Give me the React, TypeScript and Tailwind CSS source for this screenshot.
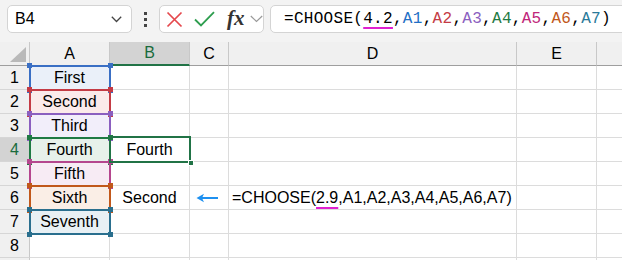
import React from "react";

const cols = ["A", "B", "C", "D", "E", ""];

type Ref = { label: string; fill: string; box: string; handle: string };

const refs: Ref[] = [
  { label: "First", fill: "bg-[#eaf0f9]", box: "top-[65px] border-[#3a6fc4]", handle: "bg-[#3a6fc4]" },
  { label: "Second", fill: "bg-[#fbeaea]", box: "top-[89px] border-[#c43b45]", handle: "bg-[#c43b45]" },
  { label: "Third", fill: "bg-[#f2eefa]", box: "top-[113px] border-[#8b5fbf]", handle: "bg-[#8b5fbf]" },
  { label: "Fourth", fill: "bg-[#e7f1ea]", box: "top-[137px] border-[#1f7a43]", handle: "bg-[#1f7a43]" },
  { label: "Fifth", fill: "bg-[#f7ebf4]", box: "top-[161px] border-[#b5468e]", handle: "bg-[#b5468e]" },
  { label: "Sixth", fill: "bg-[#faeee6]", box: "top-[185px] border-[#c1581b]", handle: "bg-[#c1581b]" },
  { label: "Seventh", fill: "bg-[#e8f0f4]", box: "top-[209px] border-[#2a6f8e]", handle: "bg-[#2a6f8e]" },
];

const cellBase = "border-r border-b border-[#dcdcdc] flex items-center justify-center text-[16px] text-black whitespace-nowrap overflow-visible";

function Handle({ cls, pos }: { cls: string; pos: string }) {
  return <div className={`absolute w-[5px] h-[5px] ${cls} ${pos}`} />;
}

function RangeBox({ r }: { r: Ref }) {
  return (
    <div className={`absolute left-[29px] w-[82px] h-[26px] border-2 pointer-events-none ${r.box}`}>
      <Handle cls={r.handle} pos="-left-[4px] -top-[4px]" />
      <Handle cls={r.handle} pos="-right-[4px] -top-[4px]" />
      <Handle cls={r.handle} pos="-left-[4px] -bottom-[4px]" />
      <Handle cls={r.handle} pos="-right-[4px] -bottom-[4px]" />
    </div>
  );
}

export default function App() {
  const rows = [1, 2, 3, 4, 5, 6, 7, 8, 9];
  return (
    <div className="w-[622px] h-[260px] overflow-hidden bg-white font-['Liberation_Sans',Arial,sans-serif]">
      {/* Formula bar */}
      <div className="h-[42px] bg-[#f3f3f3] flex items-start pt-[5px] pl-[7px]">
        <div className="shrink-0 w-[125px] h-[28px] bg-white border border-[#d4d4d4] rounded-[5px] flex items-center pl-[7px] pr-[9px] justify-between">
          <span className="text-[16px] text-black">B4</span>
          <svg width="11" height="7" viewBox="0 0 11 7" className="mt-[1px]">
            <path d="M0.8 0.8 L5.5 5.5 L10.2 0.8" fill="none" stroke="#444" strokeWidth="1.3" />
          </svg>
        </div>
        <div className="shrink-0 w-[27px] h-[28px] flex flex-col items-center justify-center gap-[3px]">
          <div className="w-[3px] h-[3px] bg-[#444]" />
          <div className="w-[3px] h-[3px] bg-[#444]" />
          <div className="w-[3px] h-[3px] bg-[#444]" />
        </div>
        <div className="shrink-0 w-[105px] h-[28px] bg-white border border-[#d4d4d4] rounded-[5px] flex items-center pl-[6px]">
          <svg width="17" height="17" viewBox="0 0 17 17">
            <path d="M1.5 1.5 L15.5 15.5 M15.5 1.5 L1.5 15.5" stroke="#e5484d" strokeWidth="1.7" fill="none" />
          </svg>
          <svg width="21" height="16" viewBox="0 0 21 16" className="ml-[11px]">
            <path d="M1 8.5 L7 14.5 L20 1.2" stroke="#2e9e4f" strokeWidth="1.8" fill="none" />
          </svg>
          <span className="ml-[12px] text-[21px] leading-none italic font-bold text-[#333] font-['Liberation_Serif',serif] mb-[2px]">fx</span>
          <svg width="13" height="8" viewBox="0 0 13 8" className="ml-[5px]">
            <path d="M0.8 1 L6.5 6.5 L12.2 1" fill="none" stroke="#9a9a9a" strokeWidth="1.2" />
          </svg>
        </div>
        <div className="shrink-0 ml-[6px] w-[400px] h-[28px] bg-white border border-[#d4d4d4] rounded-[5px] flex items-center pl-[13px] font-['Liberation_Mono',monospace] text-[16px] tracking-[0.3px] whitespace-nowrap text-black">
          <span>=CHOOSE(</span>
          <span className="underline decoration-[#e020d0] decoration-[1.5px] underline-offset-[4px]">4.2</span>
          <span>,</span>
          <span className="text-[#1f6fc5]">A1</span>
          <span>,</span>
          <span className="text-[#c43b45]">A2</span>
          <span>,</span>
          <span className="text-[#8b5fbf]">A3</span>
          <span>,</span>
          <span className="text-[#1f7a43]">A4</span>
          <span>,</span>
          <span className="text-[#c0267a]">A5</span>
          <span>,</span>
          <span className="text-[#c1581b]">A6</span>
          <span>,</span>
          <span className="text-[#2a7a9a]">A7</span>
          <span>)</span>
        </div>
      </div>

      {/* Grid */}
      <div className="relative">
        <div className="grid grid-cols-[30px_80px_80px_39px_288px_80px_80px] auto-rows-[24px]">
          {/* header row */}
          <div className="bg-[#f0f0f0] border-r border-b border-r-[#c8c8c8] border-b-[#9e9e9e] relative">
            <svg width="17" height="16" viewBox="0 0 17 16" className="absolute left-[10px] top-[5px]">
              <path d="M16 0 L16 15 L0 15 Z" fill="#b9b9b9" />
            </svg>
          </div>
          {cols.map((c, i) => (
            <div
              key={i}
              className={`border-b border-r border-r-[#c8c8c8] flex items-center justify-center text-[16px] ${
                c === "B"
                  ? "bg-[#d3d3d3] border-b-2 border-b-[#217346] text-[#1a6b3c]"
                  : "bg-[#f0f0f0] border-b-[#9e9e9e] text-black"
              }`}
            >
              {c}
            </div>
          ))}
          {rows.map((r) => {
            const ref = refs[r - 1];
            return (
              <React.Fragment key={r}>
                <div
                  className={`border-r border-b border-r-[#c8c8c8] border-b-[#d6d6d6] flex items-center justify-center text-[16px] ${
                    r === 4 ? "bg-[#d3d3d3] text-[#1a6b3c]" : "bg-[#f0f0f0] text-black"
                  }`}
                >
                  {r < 9 ? r : ""}
                </div>
                <div className={`${cellBase} ${ref ? ref.fill : ""}`}>{ref ? ref.label : ""}</div>
                <div className={cellBase}>{r === 4 ? "Fourth" : r === 6 ? "Second" : ""}</div>
                <div className={`${cellBase} justify-start pl-[6px]`}>
                  {r === 6 && (
                    <svg width="23" height="10" viewBox="0 0 23 10">
                      <path d="M22 5 L3 5" stroke="#1e90f0" strokeWidth="2" />
                      <path d="M0.5 5 L8 0.8 L6 5 L8 9.2 Z" fill="#1e90f0" />
                    </svg>
                  )}
                </div>
                <div className={`${cellBase} justify-start pl-[3px]`}>
                  {r === 6 && (
                    <span>
                      =CHOOSE(
                      <span className="underline decoration-[#e020d0] decoration-[1.5px] underline-offset-[4px]">2.9</span>
                      ,A1,A2,A3,A4,A5,A6,A7)
                    </span>
                  )}
                </div>
                <div className={cellBase}></div>
                <div className={cellBase}></div>
              </React.Fragment>
            );
          })}
        </div>

        {/* Overlays: reference highlights */}
        <div className="absolute inset-0 -top-[42px] pointer-events-none">
          {refs.map((r) => (
            <RangeBox key={r.label} r={r} />
          ))}
          {/* Active cell B4 */}
          <div className="absolute left-[109px] top-[136px] w-[82px] h-[27px] border-2 border-[#217346]">
            <div className="absolute -right-[5px] -bottom-[5px] w-[6px] h-[6px] bg-[#217346] border border-white" />
          </div>
        </div>
      </div>
    </div>
  );
}
